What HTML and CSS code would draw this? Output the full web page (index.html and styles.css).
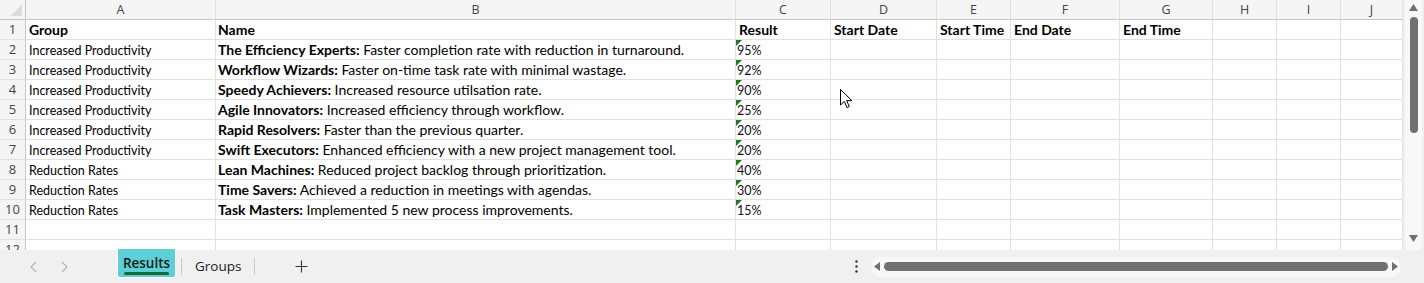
FILE: index.html
```html
<!DOCTYPE html>
<html lang="en">
<head>
    <meta charset="UTF-8">
    <meta name="viewport" content="width=device-width, initial-scale=1.0">
    <title>Results</title>
    <link rel="stylesheet" href="styles.css">
</head>
<body>
    <div class="sheet">
        <div class="grid">
            <div class="corner">
                <svg width="14" height="12" viewBox="0 0 14 12"><polygon points="13,0 13,11 1,11" fill="#dcdcdc"/></svg>
            </div>
            <div class="colhead">A</div>
            <div class="colhead">B</div>
            <div class="colhead">C</div>
            <div class="colhead">D</div>
            <div class="colhead">E</div>
            <div class="colhead">F</div>
            <div class="colhead">G</div>
            <div class="colhead">H</div>
            <div class="colhead">I</div>
            <div class="colhead">J</div>

            <div class="rowhead">1</div>
            <div class="cell head">Group</div>
            <div class="cell head name">Name</div>
            <div class="cell head">Result</div>
            <div class="cell head">Start Date</div>
            <div class="cell head">Start Time</div>
            <div class="cell head">End Date</div>
            <div class="cell head">End Time</div>
            <div class="cell"></div><div class="cell"></div><div class="cell"></div>

            <div class="rowhead">2</div>
            <div class="cell group">Increased Productivity</div>
            <div class="cell name"><b>The Efficiency Experts:</b> Faster completion rate with reduction in turnaround.</div>
            <div class="cell pct">95%</div>
            <div class="cell"></div><div class="cell"></div><div class="cell"></div><div class="cell"></div><div class="cell"></div><div class="cell"></div><div class="cell"></div>

            <div class="rowhead">3</div>
            <div class="cell group">Increased Productivity</div>
            <div class="cell name"><b>Workflow Wizards:</b> Faster on-time task rate with minimal wastage.</div>
            <div class="cell pct">92%</div>
            <div class="cell"></div><div class="cell"></div><div class="cell"></div><div class="cell"></div><div class="cell"></div><div class="cell"></div><div class="cell"></div>

            <div class="rowhead">4</div>
            <div class="cell group">Increased Productivity</div>
            <div class="cell name"><b>Speedy Achievers:</b> Increased resource utilsation rate.</div>
            <div class="cell pct">90%</div>
            <div class="cell"></div><div class="cell"></div><div class="cell"></div><div class="cell"></div><div class="cell"></div><div class="cell"></div><div class="cell"></div>

            <div class="rowhead">5</div>
            <div class="cell group">Increased Productivity</div>
            <div class="cell name"><b>Agile Innovators:</b> Increased efficiency through workflow.</div>
            <div class="cell pct">25%</div>
            <div class="cell"></div><div class="cell"></div><div class="cell"></div><div class="cell"></div><div class="cell"></div><div class="cell"></div><div class="cell"></div>

            <div class="rowhead">6</div>
            <div class="cell group">Increased Productivity</div>
            <div class="cell name"><b>Rapid Resolvers:</b> Faster than the previous quarter.</div>
            <div class="cell pct">20%</div>
            <div class="cell"></div><div class="cell"></div><div class="cell"></div><div class="cell"></div><div class="cell"></div><div class="cell"></div><div class="cell"></div>

            <div class="rowhead">7</div>
            <div class="cell group">Increased Productivity</div>
            <div class="cell name"><b>Swift Executors:</b> Enhanced efficiency with a new project management tool.</div>
            <div class="cell pct">20%</div>
            <div class="cell"></div><div class="cell"></div><div class="cell"></div><div class="cell"></div><div class="cell"></div><div class="cell"></div><div class="cell"></div>

            <div class="rowhead">8</div>
            <div class="cell group">Reduction Rates</div>
            <div class="cell name"><b>Lean Machines:</b> Reduced project backlog through prioritization.</div>
            <div class="cell pct">40%</div>
            <div class="cell"></div><div class="cell"></div><div class="cell"></div><div class="cell"></div><div class="cell"></div><div class="cell"></div><div class="cell"></div>

            <div class="rowhead">9</div>
            <div class="cell group">Reduction Rates</div>
            <div class="cell name"><b>Time Savers:</b> Achieved a reduction in meetings with agendas.</div>
            <div class="cell pct">30%</div>
            <div class="cell"></div><div class="cell"></div><div class="cell"></div><div class="cell"></div><div class="cell"></div><div class="cell"></div><div class="cell"></div>

            <div class="rowhead">10</div>
            <div class="cell group">Reduction Rates</div>
            <div class="cell name"><b>Task Masters:</b> Implemented 5 new process improvements.</div>
            <div class="cell pct">15%</div>
            <div class="cell"></div><div class="cell"></div><div class="cell"></div><div class="cell"></div><div class="cell"></div><div class="cell"></div><div class="cell"></div>

            <div class="rowhead">11</div>
            <div class="cell"></div><div class="cell"></div><div class="cell"></div><div class="cell"></div><div class="cell"></div><div class="cell"></div><div class="cell"></div><div class="cell"></div><div class="cell"></div><div class="cell"></div>

            <div class="rowhead">12</div>
            <div class="cell"></div><div class="cell"></div><div class="cell"></div><div class="cell"></div><div class="cell"></div><div class="cell"></div><div class="cell"></div><div class="cell"></div><div class="cell"></div><div class="cell"></div>
        </div>
        <div class="vscroll">
            <div class="vtrack">
                <svg class="arrow-up" width="9" height="7" viewBox="0 0 9 7"><polygon points="4.5,0 9,7 0,7" fill="#707070"/></svg>
                <div class="vthumb"></div>
                <svg class="arrow-down" width="9" height="7" viewBox="0 0 9 7"><polygon points="0,0 9,0 4.5,7" fill="#707070"/></svg>
            </div>
        </div>
    </div>

    <div class="tabbar">
        <div class="nav">
            <span class="navbtn"><svg width="7" height="12" viewBox="0 0 7 12"><polyline points="6,1 1,6 6,11" fill="none" stroke="#b4b4b4" stroke-width="1.2"/></svg></span>
            <span class="navbtn"><svg width="7" height="12" viewBox="0 0 7 12"><polyline points="1,1 6,6 1,11" fill="none" stroke="#b4b4b4" stroke-width="1.2"/></svg></span>
        </div>
        <div class="tab active">Results</div>
        <div class="sep"></div>
        <div class="tab">Groups</div>
        <div class="sep"></div>
        <div class="add">
            <svg width="13" height="13" viewBox="0 0 13 13"><path d="M6.5 0.5v12M0.5 6.5h12" stroke="#333" stroke-width="1.1"/></svg>
        </div>
        <div class="spacer"></div>
        <div class="more">
            <svg width="3" height="13" viewBox="0 0 3 13"><circle cx="1.5" cy="1.5" r="1.2" fill="#333"/><circle cx="1.5" cy="6.5" r="1.2" fill="#333"/><circle cx="1.5" cy="11.5" r="1.2" fill="#333"/></svg>
        </div>
        <div class="hscroll">
            <svg width="6" height="9" viewBox="0 0 6 9"><polygon points="0,4.5 6,0 6,9" fill="#707070"/></svg>
            <div class="hthumb"></div>
            <svg width="6" height="9" viewBox="0 0 6 9"><polygon points="0,0 6,4.5 0,9" fill="#707070"/></svg>
        </div>
    </div>

    <svg class="cursor" width="13" height="20" viewBox="0 0 13 20">
        <path d="M0.5 0.5 L0.5 16 L4.3 12.4 L7 18.6 L9.3 17.6 L6.7 11.6 L11.8 11.6 Z" fill="#fff" stroke="#000" stroke-width="1" stroke-linejoin="round"/>
    </svg>
</body>
</html>
```

FILE: styles.css
```css
body {
    margin: 0;
    width: 1424px;
    height: 283px;
    overflow: hidden;
    background: #f0f0f0;
    position: relative;
    font-family: Lato, "Open Sans", sans-serif;
    color: #000;
}
.sheet {
    display: flex;
    height: 250px;
    overflow: hidden;
    background: #fff;
}
.grid {
    display: grid;
    grid-template-columns: 26px 190px 520px 95px 106px 74px 109px 93px 64px 64px 62px;
    grid-auto-rows: 20px;
    width: 1403px;
    flex: none;
}
.corner,
.colhead,
.rowhead {
    background: #f5f5f5;
    box-sizing: border-box;
    font-family: "Open Sans", "Noto Sans", sans-serif;
    color: #444;
    font-size: 12.5px;
    line-height: 19px;
}
.corner {
    border-right: 1px solid #c6c6c6;
    border-bottom: 1px solid #c6c6c6;
    display: flex;
    justify-content: flex-end;
    align-items: flex-end;
    padding: 0 2px 2px 0;
}
.colhead {
    text-align: center;
    border-right: 1px solid #e1e1e1;
    border-bottom: 1px solid #c6c6c6;
}
.rowhead {
    text-align: center;
    border-right: 1px solid #c6c6c6;
    border-bottom: 1px solid #e1e1e1;
    font-size: 13px;
}
.cell {
    box-sizing: border-box;
    border-right: 1px solid #e1e1e1;
    border-bottom: 1px solid #e1e1e1;
    padding: 0 3px;
    line-height: 20px;
    font-size: 14px;
    white-space: nowrap;
    overflow: hidden;
}
.cell.head {
    font-weight: bold;
}
.cell.name {
    padding-left: 2px;
}
.cell.group {
    font-size: 12.5px;
    line-height: 21px;
}
.cell.pct {
    position: relative;
    font-size: 12.5px;
    padding-left: 1px;
    line-height: 21px;
    color: #111;
}
.cell.pct::before {
    content: "";
    position: absolute;
    top: 0;
    left: 0;
    border-top: 6px solid #1e7b1e;
    border-right: 6px solid transparent;
}
.vscroll {
    width: 21px;
    flex: none;
    background: #f0f0f0;
}
.vtrack {
    margin: 0 2px;
    height: 252px;
    background: #f8f8f8;
    border-radius: 0 0 8px 8px;
    display: flex;
    flex-direction: column;
    align-items: center;
}
.arrow-up {
    margin-top: 4px;
}
.vthumb {
    width: 8px;
    height: 116px;
    margin-top: 6px;
    background: #707070;
    border-radius: 4px;
}
.arrow-down {
    margin-top: auto;
    margin-bottom: 10px;
}
.tabbar {
    height: 33px;
    display: flex;
    align-items: center;
    padding-left: 18px;
    padding-right: 24px;
    font-family: "Open Sans", "Noto Sans", sans-serif;
    font-size: 13.5px;
    color: #222;
}
.nav {
    display: flex;
}
.navbtn {
    width: 31px;
    display: flex;
    justify-content: center;
}
.tab {
    margin-left: 13px;
    height: 29px;
    line-height: 29px;
}
.tab.active {
    margin-left: 37px;
    align-self: flex-start;
    margin-top: -1px;
    width: 59px;
    text-align: center;
    background: #5cd0d4;
    border: 1px solid #fff;
    border-top: none;
    border-radius: 0 0 3px 3px;
    box-sizing: border-box;
    font-weight: 600;
    color: #1a1a1a;
    line-height: 29px;
    position: relative;
}
.tab.active::after {
    content: "";
    position: absolute;
    left: 6px;
    right: 6px;
    bottom: 2px;
    height: 3px;
    border-radius: 2px;
    background: #0f6b3a;
}
.sep {
    width: 1px;
    height: 17px;
    background: #c8c8c8;
    margin-left: 5px;
}
.sep + .tab + .sep {
    margin-left: 13px;
}
.add {
    margin-left: 40px;
    display: flex;
}
.spacer {
    flex: 1;
}
.more {
    width: 18px;
    display: flex;
    justify-content: center;
    margin-right: 7px;
}
.hscroll {
    width: 528px;
    height: 20px;
    box-sizing: border-box;
    background: #f8f8f8;
    border-radius: 8px;
    display: flex;
    align-items: center;
    padding: 0 2px 0 2px;
    gap: 4px;
}
.hthumb {
    flex: 1;
    height: 9px;
    background: #707070;
    border-radius: 5px;
}
.cursor {
    position: absolute;
    left: 840px;
    top: 89px;
}
```
